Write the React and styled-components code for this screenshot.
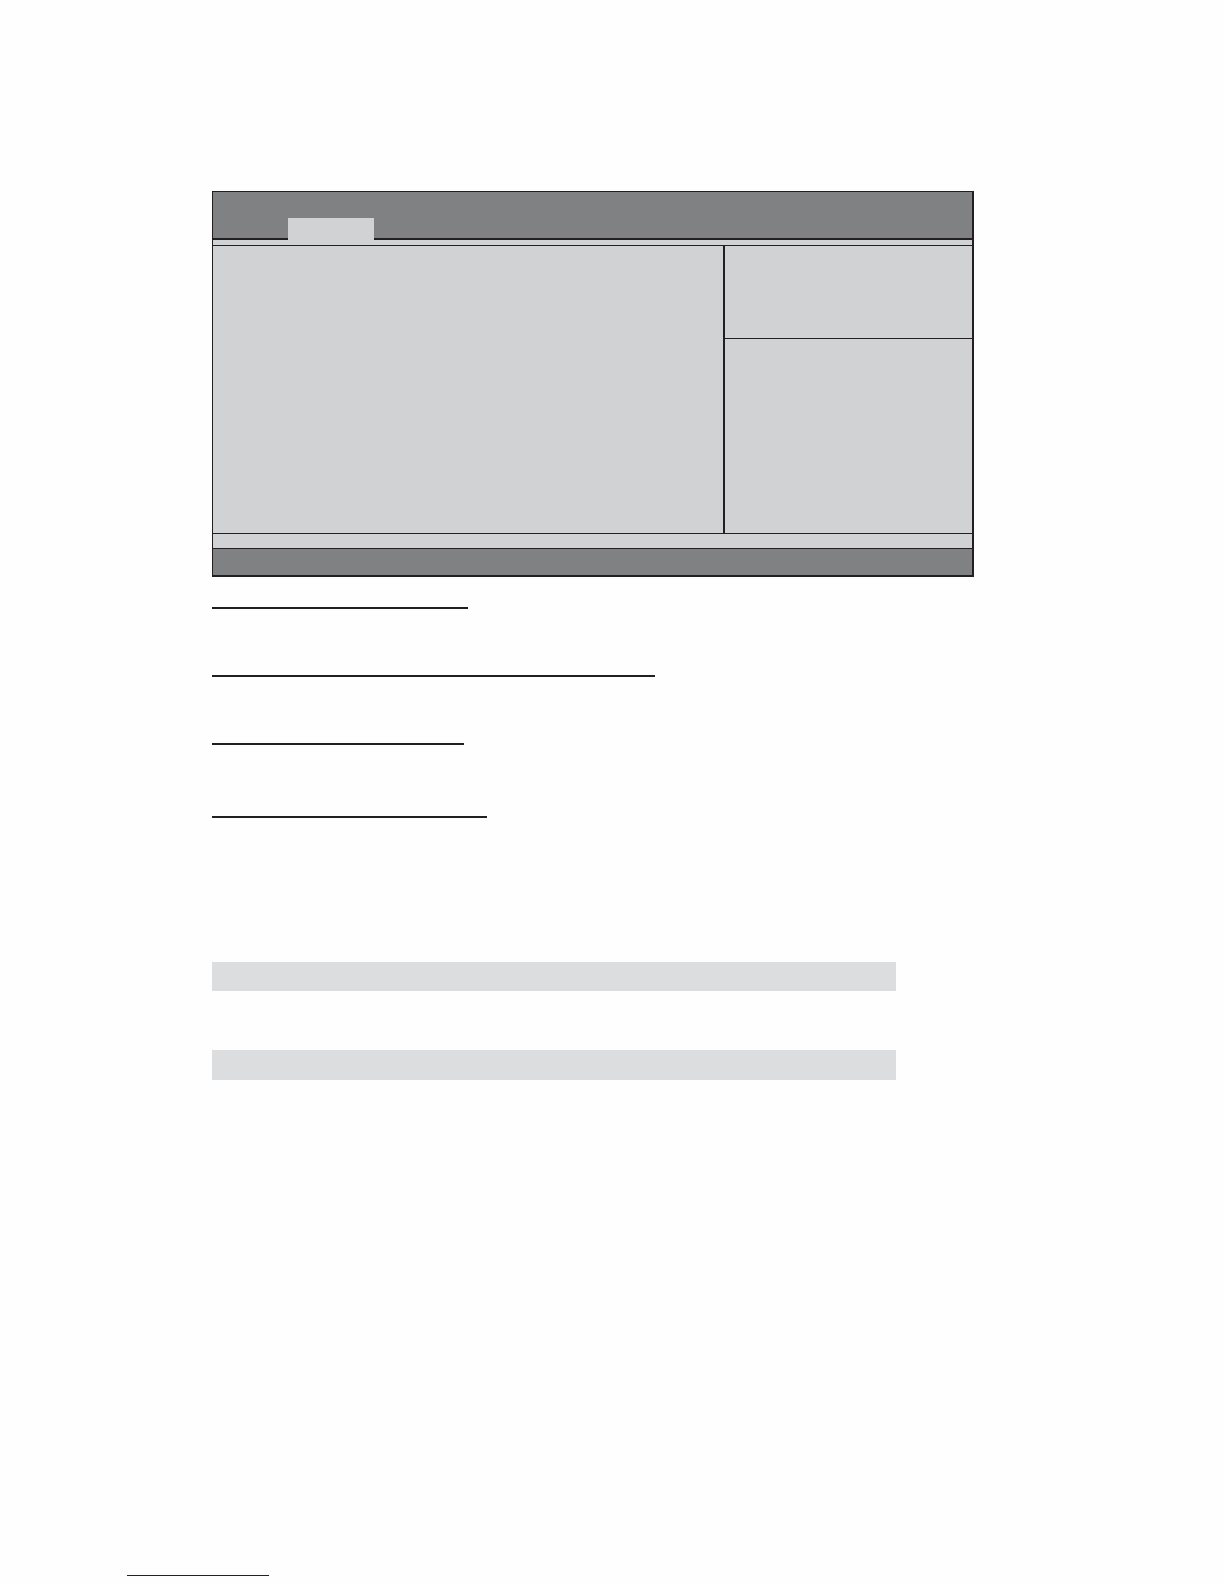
import React from "react";
import styled, { createGlobalStyle } from "styled-components";

const ink = "#231f20";
const panel = "#d1d2d4";
const chrome = "#808182";

const GlobalStyle = createGlobalStyle`
  *, *::before, *::after { box-sizing: border-box; }
  body {
    margin: 0;
    background: #fefefe;
    font-family: "Liberation Sans", Arial, sans-serif;
  }
`;

const Page = styled.div`
  display: flex;
  flex-direction: column;
  padding: 191px 0 8px;
`;

const Content = styled.main`
  display: flex;
  flex-direction: column;
  padding: 0 250px 0 212px;
`;

const SetupScreen = styled.section`
  display: flex;
  flex-direction: column;
  border: solid ${ink};
  border-width: 1px 2px 2px 1px;
  background: ${panel};
`;

const MenuBar = styled.nav`
  display: flex;
  align-items: flex-end;
  height: 48px;
  background: linear-gradient(to top, ${ink} 2px, ${chrome} 2px);
`;

const Tab = styled.button`
  width: 86px;
  height: 22px;
  margin-left: 75px;
  padding: 0;
  border: 0;
  border-radius: 0;
  background: ${panel};
`;

const Strip = styled.div`
  height: ${({ $height }) => $height}px;
  border-bottom: 1px solid ${ink};
`;

const Body = styled.div`
  display: grid;
  grid-template-columns: 510fr 249fr;
  border-bottom: 1px solid ${ink};
`;

const Options = styled.div`
  min-width: 0;
`;

const Side = styled.aside`
  display: flex;
  flex-direction: column;
  border-left: 2px solid ${ink};
`;

const HelpPanel = styled.div`
  height: 93px;
  border-bottom: 1px solid ${ink};
`;

const KeysPanel = styled.div`
  height: 194px;
`;

const StatusBar = styled.footer`
  height: 26px;
  background: ${chrome};
`;

const Headings = styled.div`
  display: flex;
  flex-direction: column;
  padding-top: 30px;
`;

const HeadingRule = styled.hr`
  width: ${({ $width }) => $width}px;
  max-width: 100%;
  height: 2px;
  margin: 0 0 ${({ $after }) => $after}px;
  border: 0;
  background: ${ink};
`;

const Bands = styled.div`
  display: flex;
  flex-direction: column;
  gap: 59px;
  max-width: 684px;
`;

const Band = styled.div`
  height: ${({ $height }) => $height}px;
  background: #dcddde;
`;

const PageFooter = styled.footer`
  display: flex;
  padding: 475px 127px 0;
`;

const FooterLink = styled.a`
  width: 142px;
  height: 21px;
  border-bottom: 1px solid #15158a;
`;

const headings = [
  { id: "first", width: 256, after: 66 },
  { id: "second", width: 443, after: 66 },
  { id: "third", width: 252, after: 71 },
  { id: "fourth", width: 275, after: 144 },
];

export default function App() {
  return (
    <>
      <GlobalStyle />
      <Page>
        <Content>
          <SetupScreen>
            <MenuBar>
              <Tab type="button" />
            </MenuBar>
            <Strip $height={6} />
            <Body>
              <Options />
              <Side>
                <HelpPanel />
                <KeysPanel />
              </Side>
            </Body>
            <Strip $height={15} />
            <StatusBar />
          </SetupScreen>
          <Headings>
            {headings.map(({ id, width, after }) => (
              <HeadingRule key={id} $width={width} $after={after} />
            ))}
          </Headings>
          <Bands>
            <Band $height={29} />
            <Band $height={30} />
          </Bands>
        </Content>
        <PageFooter>
          <FooterLink href="#" />
        </PageFooter>
      </Page>
    </>
  );
}
